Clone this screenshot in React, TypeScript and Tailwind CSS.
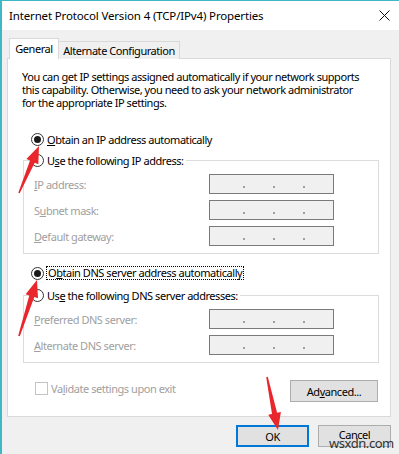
import React from 'react';

type Pt = [number, number];

// tapered annotation arrow, tail -> tip
function arrowPoints(tail: Pt, tip: Pt) {
  const dx = tip[0] - tail[0];
  const dy = tip[1] - tail[1];
  const len = Math.hypot(dx, dy);
  const ux = dx / len;
  const uy = dy / len;
  const nx = -uy;
  const ny = ux;
  const headLen = 17;
  const neck: Pt = [tip[0] - ux * headLen, tip[1] - uy * headLen];
  const p = (b: Pt, w: number): string => `${(b[0] + nx * w).toFixed(1)},${(b[1] + ny * w).toFixed(1)}`;
  return [p(tail, 0.8), p(neck, 2.6), p(neck, 6.5), `${tip[0]},${tip[1]}`, p(neck, -6.5), p(neck, -2.6), p(tail, -0.8)].join(' ');
}

function Radio({ checked }: { checked?: boolean }) {
  return (
    <span className="w-[13px] h-[13px] rounded-full border border-[#333333] bg-white flex items-center justify-center shrink-0">
      {checked && <span className="w-[7px] h-[7px] rounded-full bg-[#1a1a1a]" />}
    </span>
  );
}

function IpBox() {
  return (
    <div className="w-[125px] h-[20px] border border-[#7a7a7a] bg-[#f0f0f0] flex items-end pb-[5px] pl-[33px] gap-[28px]">
      <span className="w-[2px] h-[2px] bg-[#a0a0a0]" />
      <span className="w-[2px] h-[2px] bg-[#a0a0a0]" />
      <span className="w-[2px] h-[2px] bg-[#a0a0a0]" />
    </div>
  );
}

function FieldRow({ label }: { label: React.ReactNode }) {
  return (
    <div className="flex items-center h-[20px]">
      <span className="w-[185px] pl-[10px] text-[#a0a0a0] whitespace-nowrap">{label}</span>
      <IpBox />
    </div>
  );
}

export default function App() {
  return (
    <div
      className="relative w-[399px] h-[454px] overflow-hidden bg-[#f0f0f0] border-l-2 border-t border-[#3fb8c6] text-[11px] leading-[13px] tracking-[-0.45px] text-black"
      style={{ fontFamily: '"Noto Sans", "Open Sans", sans-serif' }}
    >
      {/* Title bar */}
      <div className="h-[29px] bg-white flex items-center justify-between pl-[7px] pr-[9px]">
        <span className="whitespace-nowrap text-[11.5px] tracking-[-0.15px]">Internet Protocol Version 4 (TCP/IPv4) Properties</span>
        <svg width="11" height="11" viewBox="0 0 11 11">
          <path d="M0.5 0.5 L10.5 10.5 M10.5 0.5 L0.5 10.5" stroke="#111" strokeWidth="1" />
        </svg>
      </div>

      <div className="pt-[8px] pl-[5px] pr-[8px]">
        {/* Tabs */}
        <div className="flex items-end pl-[2px] h-[21px]">
          <div className="relative z-10 w-[50px] h-[21px] bg-white border border-b-0 border-[#d9d9d9] flex items-center justify-center pb-[2px] whitespace-nowrap">
            General
          </div>
          <div className="w-[121px] h-[18px] bg-[#f0f0f0] border border-b-0 border-l-0 border-[#d9d9d9] flex items-center justify-center whitespace-nowrap">
            Alternate Configuration
          </div>
        </div>

        {/* Panel */}
        <div className="-mt-[1px] h-[359px] bg-white border border-[#d9d9d9] flex flex-col">
          <p className="mt-[11px] pl-[14px] whitespace-nowrap">
            You can get IP settings assigned automatically if your network supports
            <br />
            this capability. Otherwise, you need to ask your network administrator
            <br />
            for the appropriate IP settings.
          </p>

          <div className="mt-[22px] ml-[23px] h-[16px] flex items-center gap-[3px] whitespace-nowrap">
            <Radio checked />
            <span><span className="underline">O</span>btain an IP address automatically</span>
          </div>

          <fieldset className="mt-[5px] ml-[15px] mr-[11px] border border-[#dcdcdc] pb-[7px]">
            <legend className="ml-[7px] pr-[2px] h-[16px] flex items-center gap-[3px] whitespace-nowrap">
              <Radio />
              <span>U<span className="underline">s</span>e the following IP address:</span>
            </legend>
            <div className="mt-[6px] flex flex-col gap-[6px]">
              <FieldRow label={<><span className="underline">I</span>P address:</>} />
              <FieldRow label={<>S<span className="underline">u</span>bnet mask:</>} />
              <FieldRow label={<><span className="underline">D</span>efault gateway:</>} />
            </div>
          </fieldset>

          <div className="mt-[11px] ml-[23px] h-[16px] flex items-center gap-[2px] whitespace-nowrap">
            <Radio checked />
            <span className="border border-dotted border-black px-[1px] leading-[12px]">
              O<span className="underline">b</span>tain DNS server address automatically
            </span>
          </div>

          <fieldset className="mt-[6px] ml-[15px] mr-[11px] border border-[#dcdcdc] pb-[7px]">
            <legend className="ml-[7px] pr-[2px] h-[16px] flex items-center gap-[3px] whitespace-nowrap">
              <Radio />
              <span>Us<span className="underline">e</span> the following DNS server addresses:</span>
            </legend>
            <div className="mt-[6px] flex flex-col gap-[6px]">
              <FieldRow label={<><span className="underline">P</span>referred DNS server:</>} />
              <FieldRow label={<><span className="underline">A</span>lternate DNS server:</>} />
            </div>
          </fieldset>

          <div className="mt-[17px] flex items-start justify-between">
            <div className="ml-[27px] h-[16px] flex items-center gap-[3px] text-[#a0a0a0] whitespace-nowrap">
              <span className="w-[13px] h-[13px] border border-[#c4c4c4] bg-white" />
              <span>Va<span className="underline">l</span>idate settings upon exit</span>
            </div>
            <button className="mr-[12px] w-[88px] h-[22px] bg-[#e1e1e1] border border-[#adadad] flex items-center justify-center">
              Ad<span className="underline">v</span>anced...
            </button>
          </div>
        </div>

        {/* Dialog buttons */}
        <div className="mt-[8px] flex justify-end gap-[9px]">
          <button className="w-[73px] h-[22px] bg-[#e1e1e1] border-2 border-[#0078d7] flex items-center justify-center">
            OK
          </button>
          <button className="w-[73px] h-[22px] bg-[#e1e1e1] border border-[#adadad] flex items-start justify-center pt-[2px]">
            Cancel
          </button>
        </div>
      </div>

      {/* watermark */}
      <span className="absolute left-[327px] top-[436px] text-[13px] leading-[13px] text-[#333]">wsxdn.com</span>

      {/* red annotation arrows */}
      <svg className="absolute inset-0 pointer-events-none" width="399" height="454" viewBox="0 0 399 454">
        <polygon points={arrowPoints([17, 192], [37, 145])} fill="#e8262b" />
        <polygon points={arrowPoints([17, 335], [35, 279])} fill="#e8262b" />
        <polygon points={arrowPoints([265, 376], [276, 429])} fill="#e8262b" />
      </svg>
    </div>
  );
}
